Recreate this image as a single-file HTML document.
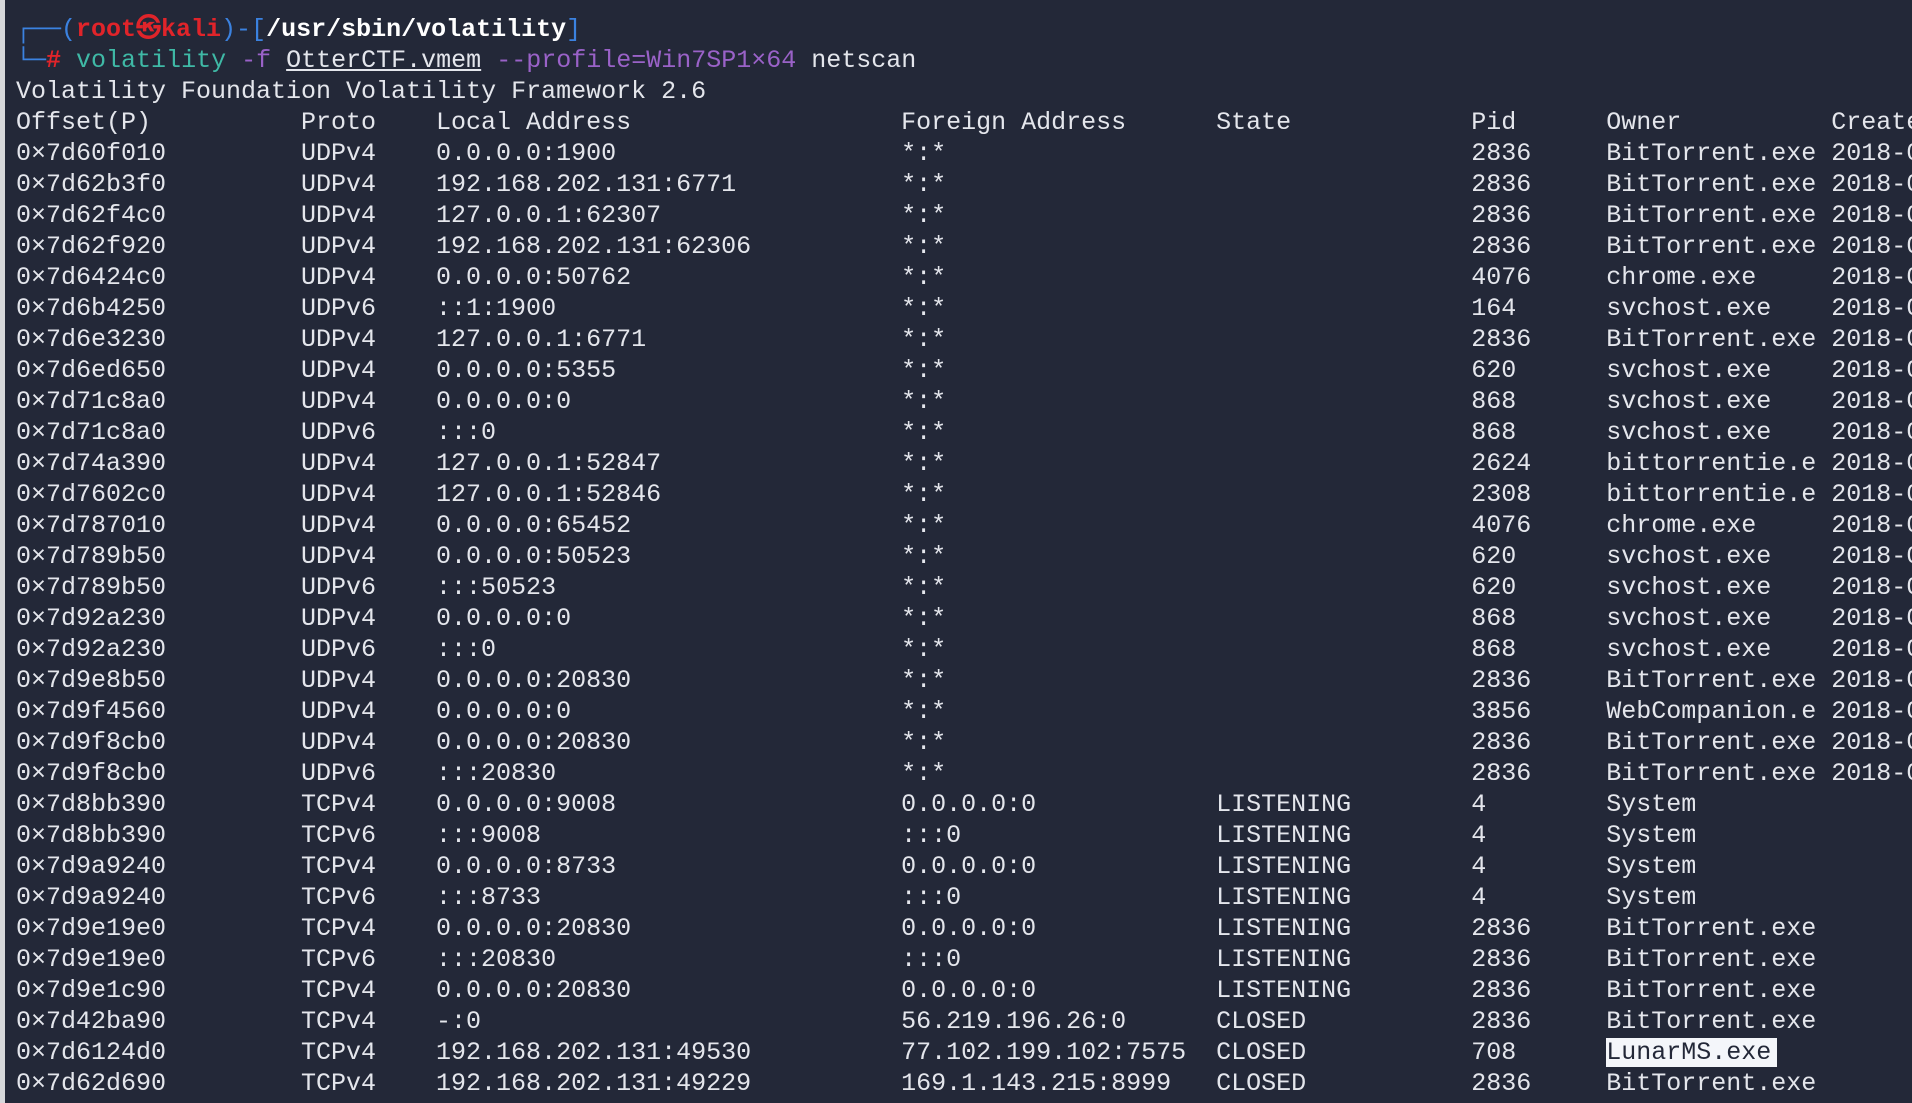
<!DOCTYPE html>
<html><head><meta charset="utf-8">
<style>
html,body{margin:0;padding:0;}
body{width:1912px;height:1103px;overflow:hidden;background:#232838;position:relative;
font-family:"Liberation Mono","DejaVu Sans Mono",monospace;font-size:25px;color:#e4e6ec;}
.strip{position:absolute;left:0;top:0;width:5px;height:1103px;background:#d6d7da;}
.t{position:absolute;left:16px;top:14px;width:1900px;}
.l{height:31px;line-height:31px;white-space:pre;overflow:hidden;}
.r i{font-style:normal;display:inline-block;vertical-align:top;overflow:hidden;white-space:pre;height:31px;}
.r i:nth-child(1){width:19ch}
.r i:nth-child(2){width:9ch}
.r i:nth-child(3){width:31ch}
.r i:nth-child(4){width:21ch}
.r i:nth-child(5){width:17ch}
.r i:nth-child(6){width:9ch}
.r i:nth-child(7){width:15ch}
.b{color:#3b82e0}.rd{color:#e0242a;font-weight:bold}.w{color:#fff;font-weight:bold}
.g{color:#3fb9a6}.p{color:#9a62c8}.u{text-decoration:underline}
.hl{background:#f4f6fa;color:#232838;padding-right:6px}
</style></head><body>
<div class="strip"></div>
<div class="t">
<div class="l"><span class="b">┌──(</span><span class="rd">root㉿kali</span><span class="b">)-[</span><span class="w">/usr/sbin/volatility</span><span class="b">]</span></div>
<div class="l"><span class="b">└─</span><span class="rd">#</span> <span class="g">volatility</span> <span class="p">-f</span> <span class="u">OtterCTF.vmem</span> <span class="p">--profile=Win7SP1×64</span> netscan</div>
<div class="l">Volatility Foundation Volatility Framework 2.6</div>
<div class="l r"><i>Offset(P)</i><i>Proto</i><i>Local Address</i><i>Foreign Address</i><i>State</i><i>Pid</i><i>Owner</i><i>CreateTime</i></div>
<div class="l r"><i>0×7d60f010</i><i>UDPv4</i><i>0.0.0.0:1900</i><i>*:*</i><i></i><i>2836</i><i>BitTorrent.exe</i><i>2018-08-04</i></div>
<div class="l r"><i>0×7d62b3f0</i><i>UDPv4</i><i>192.168.202.131:6771</i><i>*:*</i><i></i><i>2836</i><i>BitTorrent.exe</i><i>2018-08-04</i></div>
<div class="l r"><i>0×7d62f4c0</i><i>UDPv4</i><i>127.0.0.1:62307</i><i>*:*</i><i></i><i>2836</i><i>BitTorrent.exe</i><i>2018-08-04</i></div>
<div class="l r"><i>0×7d62f920</i><i>UDPv4</i><i>192.168.202.131:62306</i><i>*:*</i><i></i><i>2836</i><i>BitTorrent.exe</i><i>2018-08-04</i></div>
<div class="l r"><i>0×7d6424c0</i><i>UDPv4</i><i>0.0.0.0:50762</i><i>*:*</i><i></i><i>4076</i><i>chrome.exe</i><i>2018-08-04</i></div>
<div class="l r"><i>0×7d6b4250</i><i>UDPv6</i><i>::1:1900</i><i>*:*</i><i></i><i>164</i><i>svchost.exe</i><i>2018-08-04</i></div>
<div class="l r"><i>0×7d6e3230</i><i>UDPv4</i><i>127.0.0.1:6771</i><i>*:*</i><i></i><i>2836</i><i>BitTorrent.exe</i><i>2018-08-04</i></div>
<div class="l r"><i>0×7d6ed650</i><i>UDPv4</i><i>0.0.0.0:5355</i><i>*:*</i><i></i><i>620</i><i>svchost.exe</i><i>2018-08-04</i></div>
<div class="l r"><i>0×7d71c8a0</i><i>UDPv4</i><i>0.0.0.0:0</i><i>*:*</i><i></i><i>868</i><i>svchost.exe</i><i>2018-08-04</i></div>
<div class="l r"><i>0×7d71c8a0</i><i>UDPv6</i><i>:::0</i><i>*:*</i><i></i><i>868</i><i>svchost.exe</i><i>2018-08-04</i></div>
<div class="l r"><i>0×7d74a390</i><i>UDPv4</i><i>127.0.0.1:52847</i><i>*:*</i><i></i><i>2624</i><i>bittorrentie.e</i><i>2018-08-04</i></div>
<div class="l r"><i>0×7d7602c0</i><i>UDPv4</i><i>127.0.0.1:52846</i><i>*:*</i><i></i><i>2308</i><i>bittorrentie.e</i><i>2018-08-04</i></div>
<div class="l r"><i>0×7d787010</i><i>UDPv4</i><i>0.0.0.0:65452</i><i>*:*</i><i></i><i>4076</i><i>chrome.exe</i><i>2018-08-04</i></div>
<div class="l r"><i>0×7d789b50</i><i>UDPv4</i><i>0.0.0.0:50523</i><i>*:*</i><i></i><i>620</i><i>svchost.exe</i><i>2018-08-04</i></div>
<div class="l r"><i>0×7d789b50</i><i>UDPv6</i><i>:::50523</i><i>*:*</i><i></i><i>620</i><i>svchost.exe</i><i>2018-08-04</i></div>
<div class="l r"><i>0×7d92a230</i><i>UDPv4</i><i>0.0.0.0:0</i><i>*:*</i><i></i><i>868</i><i>svchost.exe</i><i>2018-08-04</i></div>
<div class="l r"><i>0×7d92a230</i><i>UDPv6</i><i>:::0</i><i>*:*</i><i></i><i>868</i><i>svchost.exe</i><i>2018-08-04</i></div>
<div class="l r"><i>0×7d9e8b50</i><i>UDPv4</i><i>0.0.0.0:20830</i><i>*:*</i><i></i><i>2836</i><i>BitTorrent.exe</i><i>2018-08-04</i></div>
<div class="l r"><i>0×7d9f4560</i><i>UDPv4</i><i>0.0.0.0:0</i><i>*:*</i><i></i><i>3856</i><i>WebCompanion.e</i><i>2018-08-04</i></div>
<div class="l r"><i>0×7d9f8cb0</i><i>UDPv4</i><i>0.0.0.0:20830</i><i>*:*</i><i></i><i>2836</i><i>BitTorrent.exe</i><i>2018-08-04</i></div>
<div class="l r"><i>0×7d9f8cb0</i><i>UDPv6</i><i>:::20830</i><i>*:*</i><i></i><i>2836</i><i>BitTorrent.exe</i><i>2018-08-04</i></div>
<div class="l r"><i>0×7d8bb390</i><i>TCPv4</i><i>0.0.0.0:9008</i><i>0.0.0.0:0</i><i>LISTENING</i><i>4</i><i>System</i><i></i></div>
<div class="l r"><i>0×7d8bb390</i><i>TCPv6</i><i>:::9008</i><i>:::0</i><i>LISTENING</i><i>4</i><i>System</i><i></i></div>
<div class="l r"><i>0×7d9a9240</i><i>TCPv4</i><i>0.0.0.0:8733</i><i>0.0.0.0:0</i><i>LISTENING</i><i>4</i><i>System</i><i></i></div>
<div class="l r"><i>0×7d9a9240</i><i>TCPv6</i><i>:::8733</i><i>:::0</i><i>LISTENING</i><i>4</i><i>System</i><i></i></div>
<div class="l r"><i>0×7d9e19e0</i><i>TCPv4</i><i>0.0.0.0:20830</i><i>0.0.0.0:0</i><i>LISTENING</i><i>2836</i><i>BitTorrent.exe</i><i></i></div>
<div class="l r"><i>0×7d9e19e0</i><i>TCPv6</i><i>:::20830</i><i>:::0</i><i>LISTENING</i><i>2836</i><i>BitTorrent.exe</i><i></i></div>
<div class="l r"><i>0×7d9e1c90</i><i>TCPv4</i><i>0.0.0.0:20830</i><i>0.0.0.0:0</i><i>LISTENING</i><i>2836</i><i>BitTorrent.exe</i><i></i></div>
<div class="l r"><i>0×7d42ba90</i><i>TCPv4</i><i>-:0</i><i>56.219.196.26:0</i><i>CLOSED</i><i>2836</i><i>BitTorrent.exe</i><i></i></div>
<div class="l r"><i>0×7d6124d0</i><i>TCPv4</i><i>192.168.202.131:49530</i><i>77.102.199.102:7575</i><i>CLOSED</i><i>708</i><i><span class="hl">LunarMS.exe</span></i><i></i></div>
<div class="l r"><i>0×7d62d690</i><i>TCPv4</i><i>192.168.202.131:49229</i><i>169.1.143.215:8999</i><i>CLOSED</i><i>2836</i><i>BitTorrent.exe</i><i></i></div>
</div>
</body></html>
